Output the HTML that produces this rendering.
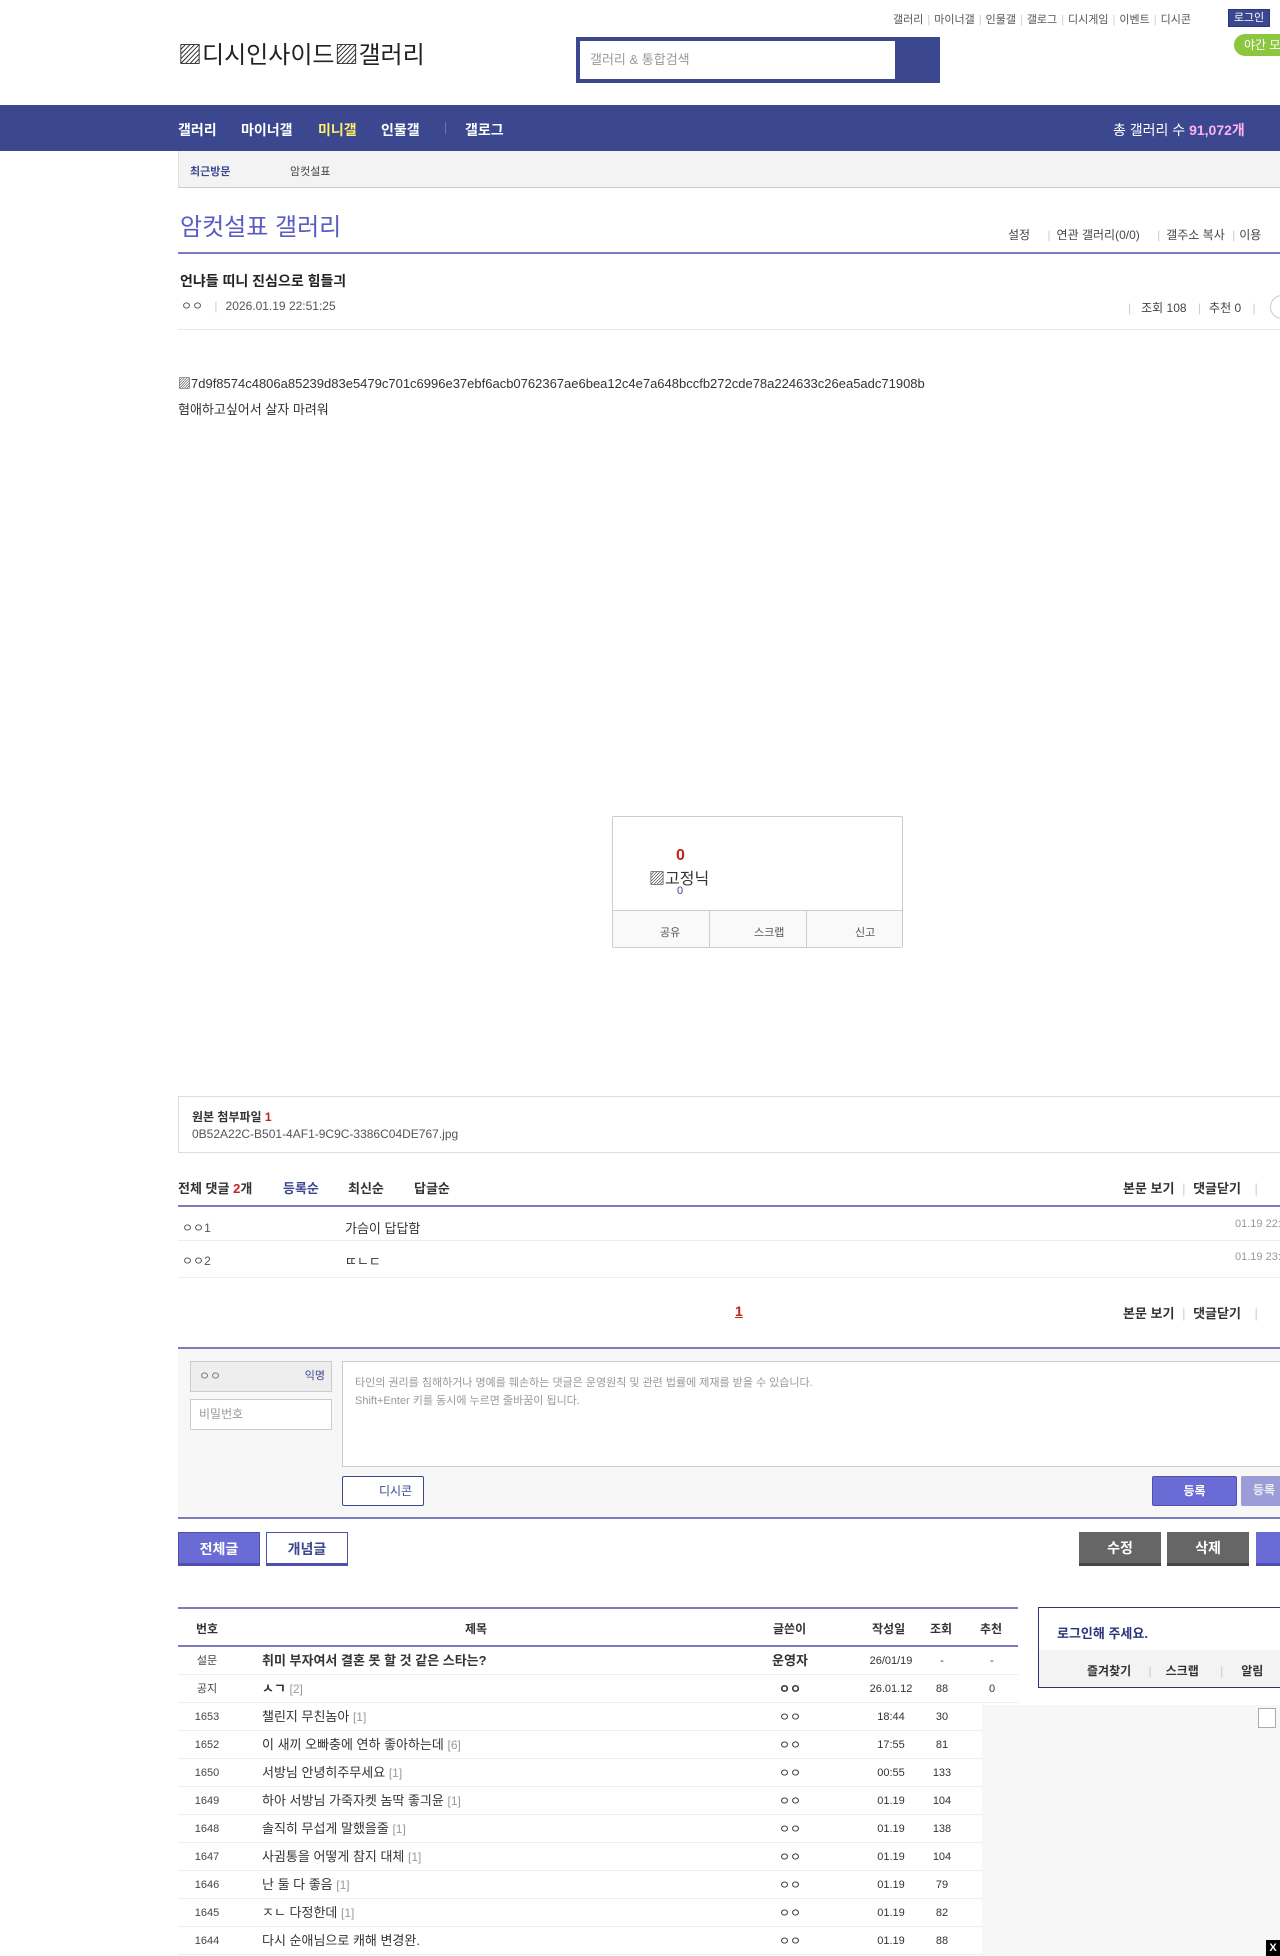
<!DOCTYPE html>
<html><head><meta charset="utf-8">
<style>
*{margin:0;padding:0;box-sizing:border-box}
html,body{width:1280px;height:1956px;overflow:hidden;background:#fff}
body{position:relative;font-family:"Liberation Sans","Noto Sans CJK KR","NanumGothic",sans-serif;font-size:12px;color:#333}
.a{position:absolute;white-space:nowrap}
.tl{font-size:11px;color:#555}
.tl span.s{color:#ccc;margin:0 4px}
.nav{left:0;top:105px;width:1280px;height:46px;background:#3b4890}
.nv{color:#fff;font-size:14px;font-weight:bold;top:120px}
.row{position:absolute;left:178px;width:840px;height:28px;border-bottom:1px solid #eee;font-size:12px}
.row div{position:absolute;top:0;line-height:28px;white-space:nowrap}
.c1{left:0;width:58px;text-align:center;font-size:11px;color:#444}
.c2{left:84px;color:#333;font-size:13px}
.c3{left:560px;width:104px;text-align:center;color:#333}
.c4{left:676px;width:74px;text-align:center;font-size:11px}
.c5{left:744px;width:40px;text-align:center;font-size:11px}
.c6{left:794px;width:40px;text-align:center;font-size:11px}
.rep{color:#999;font-size:12px}
.btn{position:absolute;height:34px;top:1532px;color:#fff;font-size:14px;font-weight:bold;text-align:center;line-height:32px}
</style></head><body>

<div class="a tl" style="left:893px;top:11px">갤러리<span class="s">|</span>마이너갤<span class="s">|</span>인물갤<span class="s">|</span>갤로그<span class="s">|</span>디시게임<span class="s">|</span>이벤트<span class="s">|</span>디시콘</div>
<div class="a" style="left:1228px;top:9px;width:42px;height:18px;background:#3b4890;border:1px solid #29367c;color:#fff;font-size:11px;text-align:center;line-height:16px">로그인</div>
<div class="a" style="left:1234px;top:34px;width:60px;height:22px;background:#8dc63f;border-radius:11px;color:#fff;font-size:12px;line-height:22px;padding-left:10px">야간 모드</div>

<div class="a" style="left:178px;top:41px;font-size:24px;color:#222;line-height:30px">▨디시인사이드▨갤러리</div>

<div class="a" style="left:576px;top:37px;width:364px;height:46px;background:#3b4890"></div>
<div class="a" style="left:580px;top:41px;width:315px;height:38px;background:#fff;color:#999;font-size:13px;line-height:38px;padding-left:10px">갤러리 &amp; 통합검색</div>

<div class="a nav"></div>
<div class="a nv" style="left:178px">갤러리</div>
<div class="a nv" style="left:241px">마이너갤</div>
<div class="a nv" style="left:318px;color:#ffef6b">미니갤</div>
<div class="a nv" style="left:381px">인물갤</div>
<div class="a" style="left:445px;top:122px;width:1px;height:12px;background:#6d78b0"></div>
<div class="a nv" style="left:465px">갤로그</div>
<div class="a" style="left:1113px;top:120px;color:#fff;font-size:14px">총 갤러리 수 <b style="color:#ffb2f1">91,072개</b></div>

<div class="a" style="left:178px;top:151px;width:1110px;height:37px;background:#f3f3f3;border-left:1px solid #ddd;border-bottom:1px solid #ccc"></div>
<div class="a" style="left:190px;top:163px;font-size:11px;color:#3b4890;font-weight:bold">최근방문</div>
<div class="a" style="left:290px;top:163px;font-size:11px;color:#444">암컷설표</div>

<div class="a" style="left:180px;top:207px;font-size:24px;color:#5b5bc6">암컷설표 갤러리</div>
<div class="a" style="left:1008px;top:226px;font-size:12px;color:#444">설정 <span style="color:#ccc;margin:0 6px 0 14px">|</span>연관 갤러리(0/0) <span style="color:#ccc;margin:0 6px 0 14px">|</span>갤주소 복사 <span style="color:#ccc;margin:0 4px">|</span>이용</div>
<div class="a" style="left:178px;top:252px;width:1110px;height:2px;background:#7b7bbf"></div>

<div class="a" style="left:180px;top:271px;font-size:14px;font-weight:bold;color:#222">언냐들 띠니 진심으로 힘들긔</div>
<div class="a" style="left:181px;top:297px;font-size:12px;color:#555">ㅇㅇ <span style="color:#ccc;margin:0 8px">|</span>2026.01.19 22:51:25</div>
<div class="a" style="left:1128px;top:299px;font-size:12px;color:#444"><span style="color:#ccc;margin-right:10px">|</span>조회 108 <span style="color:#ccc;margin:0 8px">|</span>추천 0 <span style="color:#ccc;margin:0 8px">|</span></div>
<div class="a" style="left:1270px;top:295px;width:24px;height:24px;border:1px solid #ccc;border-radius:12px"></div>
<div class="a" style="left:178px;top:329px;width:1110px;height:1px;background:#e6e6e6"></div>

<div class="a" style="left:178px;top:373px;font-size:13px;color:#333">▨7d9f8574c4806a85239d83e5479c701c6996e37ebf6acb0762367ae6bea12c4e7a648bccfb272cde78a224633c26ea5adc71908b</div>
<div class="a" style="left:178px;top:399px;font-size:13px;color:#333">혐애하고싶어서 살자 마려워</div>

<div class="a" style="left:612px;top:816px;width:291px;height:132px;border:1px solid #ccc;border-radius:2px"></div>
<div class="a" style="left:676px;top:847px;font-size:16px;font-weight:bold;color:#c4231a">0</div>
<div class="a" style="left:649px;top:865px;font-size:16px;color:#333">▨고정닉</div>
<div class="a" style="left:677px;top:885px;font-size:11px;color:#3b4890">0</div>
<div class="a" style="left:613px;top:910px;width:289px;height:37px;background:#f9f9f9;border-top:1px solid #ccc"></div>
<div class="a" style="left:709px;top:910px;width:1px;height:37px;background:#ccc"></div>
<div class="a" style="left:806px;top:910px;width:1px;height:37px;background:#ccc"></div>
<div class="a" style="left:660px;top:924px;font-size:11px;color:#555">공유</div>
<div class="a" style="left:754px;top:924px;font-size:11px;color:#555">스크랩</div>
<div class="a" style="left:855px;top:924px;font-size:11px;color:#555">신고</div>

<div class="a" style="left:178px;top:1096px;width:1110px;height:57px;border:1px solid #ddd"></div>
<div class="a" style="left:192px;top:1108px;font-size:12px;font-weight:bold;color:#333">원본 첨부파일 <span style="color:#c4231a">1</span></div>
<div class="a" style="left:192px;top:1127px;font-size:12px;color:#555">0B52A22C-B501-4AF1-9C9C-3386C04DE767.jpg</div>

<div class="a" style="left:178px;top:1178px;font-size:13px;font-weight:bold;color:#333">전체 댓글 <span style="color:#c4231a">2</span>개</div>
<div class="a" style="left:283px;top:1178px;font-size:13px;font-weight:bold;color:#3b4890">등록순</div>
<div class="a" style="left:348px;top:1178px;font-size:13px;font-weight:bold;color:#333">최신순</div>
<div class="a" style="left:414px;top:1178px;font-size:13px;font-weight:bold;color:#333">답글순</div>
<div class="a" style="left:1123px;top:1178px;font-size:13px;font-weight:bold;color:#333">본문 보기 <span style="color:#ccc;font-weight:normal;margin:0 4px">|</span> 댓글닫기 <span style="color:#ccc;font-weight:normal;margin:0 10px">|</span></div>
<div class="a" style="left:178px;top:1205px;width:1110px;height:2px;background:#7b7bbf"></div>
<div class="a" style="left:182px;top:1219px;font-size:12px;color:#555">ㅇㅇ1</div>
<div class="a" style="left:345px;top:1218px;font-size:13px;color:#333">가슴이 답답함</div>
<div class="a" style="left:1235px;top:1218px;font-size:11px;color:#999">01.19 22:</div>
<div class="a" style="left:178px;top:1240px;width:1110px;height:1px;background:#eee"></div>
<div class="a" style="left:182px;top:1252px;font-size:12px;color:#555">ㅇㅇ2</div>
<div class="a" style="left:345px;top:1251px;font-size:13px;color:#333">ㄸㄴㄷ</div>
<div class="a" style="left:1235px;top:1251px;font-size:11px;color:#999">01.19 23:</div>
<div class="a" style="left:178px;top:1277px;width:1110px;height:1px;background:#eee"></div>

<div class="a" style="left:735px;top:1303px;font-size:14px;font-weight:bold;color:#c4231a;text-decoration:underline">1</div>
<div class="a" style="left:1123px;top:1303px;font-size:13px;font-weight:bold;color:#333">본문 보기 <span style="color:#ccc;font-weight:normal;margin:0 4px">|</span> 댓글닫기 <span style="color:#ccc;font-weight:normal;margin:0 10px">|</span></div>

<div class="a" style="left:178px;top:1347px;width:1110px;height:172px;background:#f7f7f7;border-top:2px solid #7b7bbf;border-bottom:2px solid #7b7bbf"></div>
<div class="a" style="left:190px;top:1361px;width:142px;height:31px;background:#eee;border:1px solid #ccc;font-size:12px;color:#777;line-height:29px;padding-left:8px">ㅇㅇ<span style="position:absolute;right:6px;color:#3b4890;font-size:11px">익명</span></div>
<div class="a" style="left:190px;top:1399px;width:142px;height:31px;background:#fff;border:1px solid #ccc;font-size:12px;color:#999;line-height:29px;padding-left:8px">비밀번호</div>
<div class="a" style="left:342px;top:1361px;width:960px;height:106px;background:#fff;border:1px solid #ccc;font-size:11px;color:#999;padding:12px 12px;line-height:18px;white-space:normal">타인의 권리를 침해하거나 명예를 훼손하는 댓글은 운영원칙 및 관련 법률에 제재를 받을 수 있습니다.<br>Shift+Enter 키를 동시에 누르면 줄바꿈이 됩니다.</div>
<div class="a" style="left:342px;top:1476px;width:82px;height:30px;background:#fff;border:1px solid #3b4890;border-radius:2px;font-size:12px;color:#3b4890;line-height:28px;padding-left:36px">디시콘</div>
<div class="a" style="left:1152px;top:1476px;width:85px;height:30px;background:#6b6bd6;border:1px solid #4f4fb0;border-radius:2px;color:#fff;font-size:12px;font-weight:bold;text-align:center;line-height:28px">등록</div>
<div class="a" style="left:1241px;top:1476px;width:60px;height:30px;background:#9c9cd8;border-radius:2px;color:#eee;font-size:12px;font-weight:bold;line-height:28px;padding-left:12px">등록</div>

<div class="btn" style="left:178px;width:82px;background:#6b6bd6;border:1px solid #4f4fb0;border-bottom:3px solid #4f4fb0">전체글</div>
<div class="btn" style="left:266px;width:82px;background:#fff;color:#3b4890;border:1px solid #4f4fb0;border-bottom:3px solid #4f4fb0">개념글</div>
<div class="btn" style="left:1079px;width:82px;background:#666;border-bottom:3px solid #444">수정</div>
<div class="btn" style="left:1167px;width:82px;background:#666;border-bottom:3px solid #444">삭제</div>
<div class="btn" style="left:1256px;width:60px;background:#6b6bd6;border-bottom:3px solid #4f4fb0"></div>

<div class="a" style="left:178px;top:1607px;width:840px;height:2px;background:#7b7bbf"></div>
<div class="a" style="left:178px;top:1620px;width:58px;text-align:center;font-size:12px;font-weight:bold;color:#333">번호</div>
<div class="a" style="left:465px;top:1620px;font-size:12px;font-weight:bold;color:#333">제목</div>
<div class="a" style="left:773px;top:1620px;font-size:12px;font-weight:bold;color:#333">글쓴이</div>
<div class="a" style="left:872px;top:1620px;font-size:12px;font-weight:bold;color:#333">작성일</div>
<div class="a" style="left:930px;top:1620px;font-size:12px;font-weight:bold;color:#333">조회</div>
<div class="a" style="left:980px;top:1620px;font-size:12px;font-weight:bold;color:#333">추천</div>
<div class="a" style="left:178px;top:1645px;width:840px;height:2px;background:#7b7bbf"></div>

<div class="row" style="top:1647px"><div class="c1">설문</div><div class="c2" style="font-weight:bold">취미 부자여서 결혼 못 할 것 같은 스타는?</div><div class="c3" style="font-weight:bold;font-size:13px">운영자</div><div class="c4">26/01/19</div><div class="c5">-</div><div class="c6">-</div></div>
<div class="row" style="top:1675px"><div class="c1">공지</div><div class="c2" style="font-weight:bold">ㅅㄱ <span class="rep" style="font-weight:normal">[2]</span></div><div class="c3" style="font-weight:bold">ㅇㅇ</div><div class="c4">26.01.12</div><div class="c5">88</div><div class="c6">0</div></div>
<div class="row" style="top:1703px"><div class="c1">1653</div><div class="c2">챌린지 무친놈아 <span class="rep">[1]</span></div><div class="c3">ㅇㅇ</div><div class="c4">18:44</div><div class="c5">30</div></div>
<div class="row" style="top:1731px"><div class="c1">1652</div><div class="c2">이 새끼 오빠충에 연하 좋아하는데 <span class="rep">[6]</span></div><div class="c3">ㅇㅇ</div><div class="c4">17:55</div><div class="c5">81</div></div>
<div class="row" style="top:1759px"><div class="c1">1650</div><div class="c2">서방님 안녕히주무세요 <span class="rep">[1]</span></div><div class="c3">ㅇㅇ</div><div class="c4">00:55</div><div class="c5">133</div></div>
<div class="row" style="top:1787px"><div class="c1">1649</div><div class="c2">하아 서방님 가죽자켓 놈딱 좋긔윤 <span class="rep">[1]</span></div><div class="c3">ㅇㅇ</div><div class="c4">01.19</div><div class="c5">104</div></div>
<div class="row" style="top:1815px"><div class="c1">1648</div><div class="c2">솔직히 무섭게 말했을줄 <span class="rep">[1]</span></div><div class="c3">ㅇㅇ</div><div class="c4">01.19</div><div class="c5">138</div></div>
<div class="row" style="top:1843px"><div class="c1">1647</div><div class="c2">사귐통을 어떻게 참지 대체 <span class="rep">[1]</span></div><div class="c3">ㅇㅇ</div><div class="c4">01.19</div><div class="c5">104</div></div>
<div class="row" style="top:1871px"><div class="c1">1646</div><div class="c2">난 둘 다 좋음 <span class="rep">[1]</span></div><div class="c3">ㅇㅇ</div><div class="c4">01.19</div><div class="c5">79</div></div>
<div class="row" style="top:1899px"><div class="c1">1645</div><div class="c2">ㅈㄴ 다정한데 <span class="rep">[1]</span></div><div class="c3">ㅇㅇ</div><div class="c4">01.19</div><div class="c5">82</div></div>
<div class="row" style="top:1927px"><div class="c1">1644</div><div class="c2">다시 순애님으로 캐해 변경완.</div><div class="c3">ㅇㅇ</div><div class="c4">01.19</div><div class="c5">88</div></div>

<div class="a" style="left:1038px;top:1607px;width:260px;height:81px;border:1px solid #29367c;background:#fff"></div>
<div class="a" style="left:1039px;top:1650px;width:260px;height:37px;background:#f3f3f3"></div>
<div class="a" style="left:1057px;top:1623px;font-size:13px;font-weight:bold;color:#29367c">로그인해 주세요.</div>
<div class="a" style="left:1087px;top:1662px;font-size:12px;font-weight:bold;color:#333">즐겨찾기 <span style="color:#ccc;font-weight:normal;margin:0 14px">|</span>스크랩 <span style="color:#ccc;font-weight:normal;margin:0 18px">|</span>알림</div>

<div class="a" style="left:982px;top:1705px;width:298px;height:251px;background:#f7f7f7"></div>
<div class="a" style="left:1258px;top:1708px;width:18px;height:20px;border:1px solid #aaa;background:#fff"></div>
<div class="a" style="left:1266px;top:1940px;width:14px;height:16px;background:#000;color:#fff;font-size:11px;font-weight:bold;text-align:center;line-height:16px">X</div>
</body></html>
